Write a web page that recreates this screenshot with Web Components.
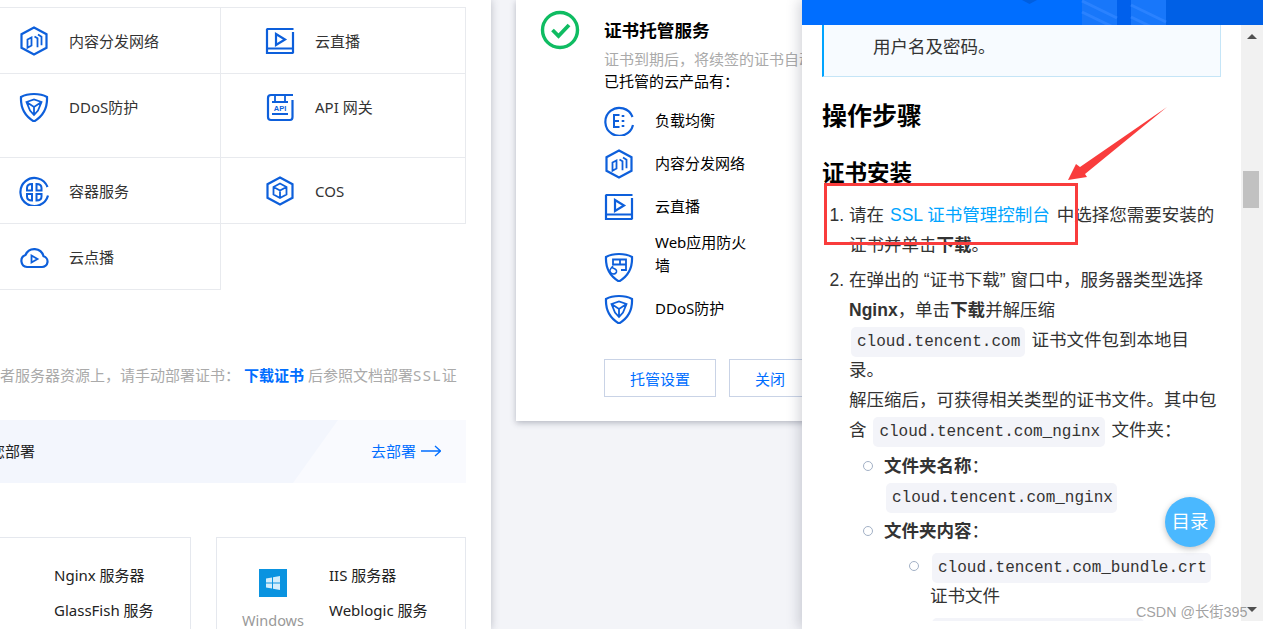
<!DOCTYPE html>
<html lang="zh-CN">
<head>
<meta charset="utf-8">
<title>SSL 证书</title>
<style>
  html, body { margin: 0; height: 100%; overflow: hidden; background: #f3f4f8; }
</style>
</head>
<body>
<app-shell>
  <console-pane slot="left">
    <product-grid>
      <product-cell icon="cdn">内容分发网络</product-cell>
      <product-cell icon="live" side="right">云直播</product-cell>
      <product-cell icon="ddos" tall>DDoS防护</product-cell>
      <product-cell icon="api" side="right" tall>API 网关</product-cell>
      <product-cell icon="container">容器服务</product-cell>
      <product-cell icon="cos" side="right">COS</product-cell>
      <product-cell icon="vod">云点播</product-cell>
    </product-grid>
  </console-pane>
  <hosting-panel slot="center"></hosting-panel>
  <doc-drawer slot="right"></doc-drawer>
</app-shell>

<script>
const ICONS = {
  cdn: `<path d="M15 1.500 27.500 8.200v13.600L15 28.500 2.500 21.800V8.200z"/><path d="M8.500 13.500l4-2v8l-4 2.200zM15.500 10.500l3 1.800v9M19 8.500l3.500 2.200v8.500" stroke-width="1.800"/>`,
  live: `<path d="M1.500 3h27M2 3v24h26.500M28 6v21M2 22.500h26" /><path d="M11 8l9 5.500-9 5.500z"/>`,
  ddos: `<path d="M15 2c5 0 9.500 1 13 3 .5 10-3.500 19-13 24.500C5.500 24 1.500 15 2 5c3.500-2 8-3 13-3z"/><path d="M7.500 10 15 7.500 22.500 10 19 18.500 15 23l-4-4.500zM7.500 10 15 15l7.500-5M15 15v8" stroke-width="1.800"/>`,
  api: `<path d="M28 3H6Q3 3 3 6v19q0 3 3 3h19q2.500 0 2.500-3V8"/><path d="M10 4v5M20 4v5M7 10h16M7 22h16" stroke-width="1.800"/><text x="15" y="19" text-anchor="middle" font-family="Liberation Sans" font-weight="700" font-size="7.500" fill="#0d5fdb" stroke="none">API</text>`,
  container: `<path d="M29 19.500A14 14 0 1 1 28.500 11"/><path d="M13 8v6.500H8V12q0-4 5-4zM17.500 8q5 0 5 4v2.500h-5zM8 18h5v6.500q-5 0-5-4zM17.500 18h5v2.500q0 4-5 4z" stroke-width="2"/>`,
  cos: `<path d="M15 1.500 27.500 8.200v13.600L15 28.500 2.500 21.800V8.200z"/><path d="M15 7.500 21.500 11v7.500L15 22l-6.500-3.500V11zM8.500 11 15 14.500 21.500 11M15 14.500V22" stroke-width="1.800"/>`,
  vod: `<path d="M8 25h15a5.500 5.500 0 0 0 1.500-10.800A9.500 9.500 0 0 0 6.500 13 6.200 6.200 0 0 0 8 25z"/><path d="M12.500 13.500l6 3.500-6 3.500z" stroke-width="1.800"/>`,
  lb: `<path d="M29 19A14 14 0 1 1 28.500 11"/><path d="M15.500 9H10v12h5.500M10 15h5" stroke-width="2"/><path d="M19 9v2M19 14v2M19 19v2" stroke-width="2.600"/>`,
  waf: `<path d="M15 2c5 0 9.500 1 13 3 .5 10-3.500 19-13 24.500C5.500 24 1.500 15 2 5c3.500-2 8-3 13-3z"/><path d="M9 13V7.500h13V18h-5M9 12.500h7V7.500M16 12.500h6" stroke-width="1.800"/><path d="M9 22q-3.500-1-3-4 1-2 2.500-3.500 0 2 1.500 2 3 1 2.500 3.500-.5 2-3.500 2z" stroke-width="1.500"/>`
};

class TcIcon extends HTMLElement {
  connectedCallback() {
    const name = this.getAttribute('name');
    const root = this.attachShadow({ mode: 'open' });
    root.innerHTML = `
      <style>
        :host { display: block; width: 30px; height: 30px; flex: none; }
        svg { display: block; fill: none; stroke: #0d5fdb; stroke-width: 2.200; }
      </style>
      <svg width="30" height="30" viewBox="0 0 30 30">${ICONS[name] || ''}</svg>`;
  }
}
customElements.define('tc-icon', TcIcon);

class AppShell extends HTMLElement {
  constructor() {
    super();
    this.attachShadow({ mode: 'open' }).innerHTML = `
      <style>
        :host {
          display: flex;
          width: 1263px;
          height: 629px;
          overflow: hidden;
          font-family: "Noto Sans", "Noto Sans CJK SC", sans-serif;
        }
        ::slotted([slot=left]) { position: relative; z-index: 1; }
        ::slotted([slot=right]) { position: relative; z-index: 2; }
      </style>
      <slot name="left"></slot>
      <slot name="center"></slot>
      <slot name="right"></slot>`;
  }
}
customElements.define('app-shell', AppShell);

class ConsolePane extends HTMLElement {
  constructor() {
    super();
    this.attachShadow({ mode: 'open' }).innerHTML = `
      <style>
        :host {
          display: block;
          box-sizing: border-box;
          width: 491px;
          height: 629px;
          flex: none;
          padding: 7px 25px 0 0;
          overflow: hidden;
          background: #fff;
          box-shadow: 0 0 8px rgba(54, 58, 80, 0.3);
          clip-path: inset(0 -20px 0 0);
          color: #333;
          font-size: 15px;
        }
        .note {
          margin: 73px 0 0;
          white-space: nowrap;
          line-height: 24px;
          color: #aaa;
        }
        .note b { margin-left: 4px; color: #006eff; }
        .note i { font-style: normal; letter-spacing: 1.500px; }
        .banner {
          position: relative;
          display: flex;
          justify-content: space-between;
          align-items: center;
          box-sizing: border-box;
          height: 63px;
          margin-top: 33px;
          padding: 0 25px 2px 0;
          overflow: hidden;
          background: #f3f6fd;
          color: #222;
        }
        .banner::before {
          content: "";
          position: absolute;
          inset: 0;
          background: #f9fafe;
          clip-path: polygon(338px 0, 100% 0, 100% 100%, 293px 100%);
        }
        .banner span { position: relative; }
        .banner .clipped { margin-left: -10px; }
        .banner .go { display: flex; align-items: center; gap: 5px; color: #006eff; }
        .cards { display: flex; gap: 25px; margin-top: 54px; }
        .card {
          box-sizing: border-box;
          display: flex;
          height: 120px;
          border: 1px solid #e5e8ee;
          color: #222;
        }
        .card.first { width: 191px; border-left: 0; padding-left: 54px; }
        .card.second { width: 250px; }
        .logo {
          display: flex;
          flex-direction: column;
          align-items: center;
          width: 112px;
          padding-top: 31px;
          color: #999;
          font-size: 14.500px;
        }
        .logo span { margin-top: 13px; }
        .names { display: flex; flex-direction: column; gap: 11px; padding-top: 25px; line-height: 24px; white-space: nowrap; }
      </style>
      <slot></slot>
      <p class="note">者服务器资源上，请手动部署证书：<b>下载证书</b> 后参照文档部署<i>SSL</i>证</p>
      <div class="banner">
        <span class="clipped">您部署</span>
        <span class="go">去部署
          <svg width="20" height="12" viewBox="0 0 20 12" fill="none" stroke="#006eff" stroke-width="1.300"><path d="M0 6h19M14 1l5.500 5-5.500 5"/></svg>
        </span>
      </div>
      <div class="cards">
        <div class="card first">
          <div class="names"><span>Nginx 服务器</span><span>GlassFish 服务</span></div>
        </div>
        <div class="card second">
          <div class="logo">
            <svg width="28" height="28" viewBox="0 0 28 28">
              <rect width="28" height="28" fill="#0a93e0"/>
              <path d="M7 9.500l6-1v5H7zM14 8.300l7-1.200v6.400h-7zM7 14.500h6v5l-6-1zM14 14.500h7v6.400l-7-1.200z" fill="#d4edfb"/>
            </svg>
            <span>Windows</span>
          </div>
          <div class="names"><span>IIS 服务器</span><span>Weblogic 服务</span></div>
        </div>
      </div>`;
  }
}
customElements.define('console-pane', ConsolePane);

class ProductGrid extends HTMLElement {
  constructor() {
    super();
    this.attachShadow({ mode: 'open' }).innerHTML = `
      <style>
        :host {
          display: grid;
          grid-template-columns: 221px 245px;
          grid-auto-rows: auto;
          border-top: 1px solid #e8eaee;
          width: 466px;
        }
      </style>
      <slot></slot>`;
  }
}
customElements.define('product-grid', ProductGrid);

class ProductCell extends HTMLElement {
  connectedCallback() {
    const root = this.attachShadow({ mode: 'open' });
    root.innerHTML = `
      <style>
        :host {
          display: flex;
          box-sizing: border-box;
          height: 66px;
          padding: 18px 0 0 19px;
          gap: 20px;
          border-right: 1px solid #e8eaee;
          border-bottom: 1px solid #e8eaee;
        }
        :host([tall]) { height: 84px; }
        :host([side=right]) { padding-left: 44px; }
        .label { line-height: 32px; margin-top: -1px; color: #333; }
      </style>
      <tc-icon name="${this.getAttribute('icon')}"></tc-icon>
      <span class="label"><slot></slot></span>`;
  }
}
customElements.define('product-cell', ProductCell);

class HostingPanel extends HTMLElement {
  constructor() {
    super();
    this.attachShadow({ mode: 'open' }).innerHTML = `
      <style>
        :host { display: block; flex: none; width: 311px; padding-left: 25px; box-sizing: border-box; color: #000; font-size: 15px; }
        .panel {
          display: flex;
          box-sizing: border-box;
          width: 300px;
          height: 421px;
          padding: 10px 0 0 24px;
          gap: 24px;
          background: #fff;
          box-shadow: 0 2px 6px rgba(54, 58, 80, 0.32);
          overflow: hidden;
        }
        .check { flex: none; }
        .body { width: 250px; flex: none; }
        h3 { margin: 6px 0 0; font-size: 17.600px; line-height: 28px; font-weight: 700; }
        .desc { margin: 3px 0 -1px; color: #aaa; line-height: 24px; white-space: nowrap; overflow: hidden; }
        .sub { margin: 0; line-height: 22px; }
        ul { list-style: none; margin: 7px 0 0; padding: 0; }
        li { display: flex; align-items: center; gap: 21px; }
        li span { width: 104px; line-height: 23px; }
        li.one { height: 43px; }
        li.two { height: 59px; }
        li.two tc-icon { margin-top: 18px; }
        li.two span { margin-bottom: 7px; }
        .actions { display: flex; gap: 13px; margin-top: 29px; }
        button {
          box-sizing: border-box;
          height: 38px;
          width: 112px;
          flex: none;
          background: #fff;
          border: 1px solid #c9d3e6;
          color: #006eff;
          font: inherit;
          padding: 0;
        }
        button.close { width: 82px; }
      </style>
      <div class="panel">
        <svg class="check" width="40" height="40" viewBox="0 0 40 40" fill="none" stroke="#0fbc62" stroke-width="3.400">
          <circle cx="20" cy="20" r="17.500"/>
          <path d="M12.500 20l6 6L29 15" stroke-width="3.800"/>
        </svg>
        <div class="body">
          <h3>证书托管服务</h3>
          <p class="desc">证书到期后，将续签的证书自动部署至</p>
          <p class="sub">已托管的云产品有：</p>
          <ul>
            <li class="one"><tc-icon name="lb"></tc-icon><span>负载均衡</span></li>
            <li class="one"><tc-icon name="cdn"></tc-icon><span>内容分发网络</span></li>
            <li class="one"><tc-icon name="live"></tc-icon><span>云直播</span></li>
            <li class="two"><tc-icon name="waf"></tc-icon><span>Web应用防火墙</span></li>
            <li class="one"><tc-icon name="ddos"></tc-icon><span>DDoS防护</span></li>
          </ul>
          <div class="actions"><button>托管设置</button><button class="close">关闭</button></div>
        </div>
      </div>`;
  }
}
customElements.define('hosting-panel', HostingPanel);

class CodeChip extends HTMLElement {
  constructor() {
    super();
    this.attachShadow({ mode: 'open' }).innerHTML = `
      <style>
        :host {
          display: inline;
          margin: 0 2px;
          padding: 6px 4.500px 6px 6px;
          border-radius: 5px;
          background: #f3f4f9;
          font-family: "Liberation Mono", monospace;
          font-size: 16px;
          line-height: 20px;
        }
      </style>
      <slot></slot>`;
  }
}
customElements.define('code-chip', CodeChip);

class DocDrawer extends HTMLElement {
  constructor() {
    super();
    this.attachShadow({ mode: 'open' }).innerHTML = `
      <style>
        :host {
          display: flex;
          flex-direction: column;
          flex: none;
          width: 461px;
          height: 629px;
          background: #fff;
          box-shadow: -3px 0 12px rgba(54, 58, 80, 0.22);
          font-family: "Liberation Sans", "Noto Sans CJK SC", sans-serif;
          font-size: 17.500px;
          line-height: 30px;
          color: #333;
        }
        .head { display: block; flex: none; width: 461px; height: 25px; }
        .main { display: flex; height: 596px; flex: none; }
        .doc { box-sizing: border-box; width: 439px; padding: 0 20px; overflow: hidden; }
        .callout {
          box-sizing: border-box;
          height: 52px;
          padding: 7px 0 0 49px;
          border: 1px solid #c5e5f7;
          border-top: 0;
          border-left: 2px solid #00a4ff;
          background: #f7fbff;
        }
        h2 { margin: 22px 0 0; font-size: 25px; line-height: 35px; color: #000; }
        h3 { margin: 25px 0 0; font-size: 22.500px; line-height: 30px; color: #000; }
        ol { margin: 11px 0 0; padding: 0 0 0 27px; width: 372px; }
        ol > li { margin-bottom: 5px; }
        a { color: #00a4ff; text-decoration: none; margin: 0 2px 0 6px; }
        b { color: #333; }
        ul { list-style: none; margin: 5px 0 0; padding: 0 0 0 35px; }
        ol > li > ul { margin-top: 6px; }
        ul li { position: relative; margin-bottom: 5px; }
        ul ul { padding-left: 46px; }
        ul li::before {
          content: "";
          position: absolute;
          left: -21px;
          top: 10px;
          width: 8px;
          height: 8px;
          border: 1px solid #a3b1c6;
          border-radius: 50%;
        }
        .bar { position: relative; width: 22px; flex: none; background: #f1f1f1; }
        .thumb { position: absolute; left: 2px; top: 146px; width: 16px; height: 37px; background: #c1c1c1; }
        .up, .down { position: absolute; left: 6px; width: 0; height: 0; border: 5px solid transparent; }
        .up { top: 9px; border-bottom: 5px solid #505050; border-top: 0; }
        .down { bottom: 9px; border-top: 5px solid #505050; border-bottom: 0; }
        .toc {
          position: absolute;
          left: 363px;
          top: 497px;
          display: flex;
          align-items: center;
          justify-content: center;
          width: 50px;
          height: 50px;
          border-radius: 50%;
          background: #4ab8ff;
          box-shadow: 0 2px 6px rgba(0, 0, 0, 0.25);
          color: #fff;
          font-size: 18.500px;
        }
        .mark {
          position: absolute;
          left: 334px;
          top: 600px;
          color: rgba(120, 120, 120, 0.7);
          font-size: 14.300px;
          line-height: 24px;
          white-space: nowrap;
        }
        .redline { position: absolute; left: 0; top: 0; pointer-events: none; }
      </style>
      <svg class="head" viewBox="0 0 461 25">
        <rect width="461" height="25" fill="#006eff"/>
        <rect x="363" width="98" height="25" fill="#0060e6"/>
        <rect x="280" width="35" height="25" fill="#1877fa"/>
        <rect x="315" width="14" height="25" fill="#0060ec"/>
        <rect x="329" width="35" height="25" fill="#1877fa"/>
        <path d="M280 1l35 17M280 12l35 17M329 5l35 17M329 17l35 17" stroke="#2a82ff" stroke-width="3"/>
        <path d="M220 0h15l-7.500 4z" fill="#005fe0"/>
      </svg>
      <div class="main">
        <div class="doc">
          <div class="callout">用户名及密码。</div>
          <h2>操作步骤</h2>
          <h3>证书安装</h3>
          <ol>
            <li>请在<a>SSL 证书管理控制台</a> 中选择您需要安装的证书并单击<b>下载</b>。</li>
            <li>在弹出的 “证书下载” 窗口中，服务器类型选择 <b>Nginx</b>，单击<b>下载</b>并解压缩 <code-chip>cloud.tencent.com</code-chip> 证书文件包到本地目录。<br>
              解压缩后，可获得相关类型的证书文件。其中包含 <code-chip>cloud.tencent.com_nginx</code-chip> 文件夹：
              <ul>
                <li><b>文件夹名称</b>：<br><code-chip>cloud.tencent.com_nginx</code-chip></li>
                <li><b>文件夹内容</b>：
                  <ul>
                    <li><code-chip>cloud.tencent.com_bundle.crt</code-chip> 证书文件</li>
                    <li><code-chip>cloud.tencent.com.key</code-chip> 私钥文件</li>
                  </ul>
                </li>
              </ul>
            </li>
          </ol>
        </div>
        <div class="bar"><div class="up"></div><div class="thumb"></div><div class="down"></div></div>
      </div>
      <div class="toc">目录</div>
      <div class="mark">CSDN @长街395</div>
      <svg class="redline" width="461" height="260" viewBox="802 0 461 260">
        <rect x="825.500" y="184.500" width="251" height="59" fill="none" stroke="#f93c3c" stroke-width="3"/>
        <path d="M1167 107 1085 174 1087 177 1068 180 1076 164 1080 167z" fill="#f93c3c"/>
      </svg>`;
  }
}
customElements.define('doc-drawer', DocDrawer);
</script>
</body>
</html>
